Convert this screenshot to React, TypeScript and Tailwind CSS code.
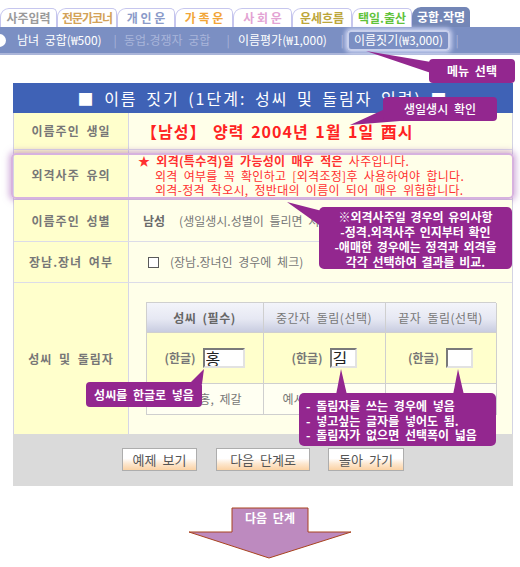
import React from "react";

const tabs = [
  { label: "사주입력", cls: "w-[57px] text-[#9a9a9a]" },
  { label: "전문가코너", cls: "w-[60px] text-[#d3a257] tracking-[-1px]" },
  { label: "개 인 운", cls: "w-[58px] text-[#8b9bc9]" },
  { label: "가 족 운", cls: "w-[58px] text-[#f2a537]" },
  { label: "사 회 운", cls: "w-[59px] text-[#e3a3d3]" },
  { label: "운세흐름", cls: "w-[60px] text-[#bca63a]" },
  { label: "택일.출산", cls: "w-[60px] text-[#5fc23a]" },
];

function Row({
  h,
  label,
  last,
  children,
}: {
  h: string;
  label: string;
  last?: boolean;
  children: React.ReactNode;
}) {
  return (
    <div className={`relative flex ${h} ${last ? "" : "border-b border-[#dcdce8]"}`}>
      <div className="flex w-[115px] shrink-0 items-center justify-center border-r border-[#d6d6e6] bg-[#ffffcc] font-bold tracking-[1px] text-[#777]">
        {label}
      </div>
      <div className="flex flex-1 items-center bg-[#ffffe9]">{children}</div>
    </div>
  );
}

function Btn({ w, children }: { w: string; children: React.ReactNode }) {
  return (
    <div
      className={`flex h-[23px] items-center justify-center border border-[#adadad] bg-[linear-gradient(to_bottom,#ffffff_0%,#ffffff_45%,#fde7cf_70%,#fbd2a4_100%)] text-[13px] text-[#555] ${w}`}
    >
      {children}
    </div>
  );
}

export default function App() {
  return (
    <div className="relative h-[567px] w-[520px] overflow-hidden bg-white font-['Noto_Sans_CJK_KR','Noto_Sans',sans-serif] text-[12px] leading-none text-[#777] [word-spacing:3px]">
      {/* Tabs */}
      <div className="flex h-[27px] items-end">
        {tabs.map((t) => (
          <div
            key={t.label}
            className={`flex h-[19px] items-center justify-center rounded-tl-[9px] rounded-tr-[5px] border border-b-0 border-[#c6c6ee] bg-white text-[12px] font-bold [word-spacing:0px] ${t.cls}`}
          >
            {t.label}
          </div>
        ))}
        <div className="flex h-[20px] w-[58px] items-center justify-center rounded-tl-[9px] rounded-tr-[5px] bg-[#7386b6] text-[12px] font-bold text-white [word-spacing:0px]">
          궁합.작명
        </div>
      </div>

      {/* Nav bar */}
      <div className="flex h-[28px] items-center border-b-2 border-[#aab5d9] bg-[#7b8fc3] text-[12px] text-white">
        <span className="ml-[-7px] h-[13px] w-[13px] shrink-0 rounded-full bg-white" />
        <span className="ml-[11px] w-[92px] shrink-0 whitespace-nowrap">남녀 궁합(₩500)</span>
        <span className="w-[12px] shrink-0 text-center text-[#a9b4d8]">|</span>
        <span className="w-[101px] shrink-0 whitespace-nowrap pl-[3px] text-[#a9b5da]">동업.경쟁자 궁합</span>
        <span className="w-[12px] shrink-0 text-center text-[#a9b4d8]">|</span>
        <span className="w-[103px] shrink-0 whitespace-nowrap pl-[4px]">이름평가(₩1,000)</span>
        <span className="w-[10px] shrink-0 text-center text-[#a9b4d8]">|</span>
        <span className="flex h-[21px] w-[103px] shrink-0 items-center justify-center whitespace-nowrap rounded-[4px] border-2 border-[#c8d0ec] shadow-[0_0_4px_2px_rgba(225,230,255,0.75)]">
          이름짓기(₩3,000)
        </span>
        <span className="w-[14px] shrink-0 text-center text-[#a9b4d8]">|</span>
      </div>

      {/* Main table */}
      <div className="ml-[13px] mt-[28px] w-[500px]">
        <div className="flex h-[30px] items-center justify-center bg-[#3f62b6] text-[16px] tracking-[2px] text-white">
          ■ 이름 짓기 (1단계: 성씨 및 돌림자 입력) ■
        </div>
        <div className="border-x border-[#d3d3e3]">
          <Row h="h-[37px]" label="이름주인 생일">
            <span className="pl-[12px] text-[16px] font-bold tracking-[1px] text-[#ff2222] [word-spacing:2px]">
              【남성】 양력 2004년 1월 1일 酉시
            </span>
          </Row>
          <Row h="h-[50px]" label="외격사주 유의">
            <div className="mt-[3px] flex flex-col pl-[9px] leading-[14.5px] tracking-[0.3px] text-[#ff3030]">
              <div>
                <span className="font-bold">★ 외격(특수격)일 가능성이 매우 적은</span> 사주입니다.
              </div>
              <div className="pl-[17px]">외격 여부를 꼭 확인하고 [외격조정]후 사용하여야 합니다.</div>
              <div className="pl-[17px]">외격-정격 착오시, 정반대의 이름이 되어 매우 위험합니다.</div>
            </div>
            <div className="pointer-events-none absolute left-[-3px] right-[-2px] top-[3px] h-[46px] rounded-[5px] border-[2px] border-[#d7b2df] shadow-[0_0_6px_2px_rgba(165,95,185,0.5)]" />
          </Row>
          <Row h="h-[42px]" label="이름주인 성별">
            <span className="whitespace-nowrap pl-[14px]">
              <b className="text-[#6b6b6b]">남성</b>
              <span className="ml-[14px]">(생일생시.성별이 틀리면 처음부터 다시 입력하세요)</span>
            </span>
          </Row>
          <Row h="h-[41px]" label="장남.장녀 여부">
            <span className="ml-[19px] h-[11px] w-[11px] shrink-0 border border-[#5a5a5a] bg-white" />
            <span className="ml-[11px]">(장남.장녀인 경우에 체크)</span>
          </Row>
          <Row h="h-[151px]" label="성씨 및 돌림자" last>
            <div className="flex w-full justify-center">
              <div className="grid w-[350px] grid-cols-[117px_122px_111px] border-l border-t border-[#cfcfcf]">
                <div className="flex h-[30px] items-center justify-center border-b border-r border-[#cfcfcf] bg-[linear-gradient(to_bottom,#f3f4fa_0%,#e6e8f3_55%,#c8cce0_100%)] font-bold tracking-[0.5px] text-[#666]">
                  성씨 (필수)
                </div>
                <div className="flex h-[30px] items-center justify-center border-b border-r border-[#cfcfcf] bg-[linear-gradient(to_bottom,#f3f4fa_0%,#e6e8f3_55%,#c8cce0_100%)] tracking-[0.5px] text-[#777]">
                  중간자 돌림(선택)
                </div>
                <div className="flex h-[30px] items-center justify-center border-b border-r border-[#cfcfcf] bg-[linear-gradient(to_bottom,#f3f4fa_0%,#e6e8f3_55%,#c8cce0_100%)] tracking-[0.5px] text-[#777]">
                  끝자 돌림(선택)
                </div>

                <div className="flex h-[51px] items-center justify-center gap-[7px] border-b border-r border-[#cfcfcf] bg-[#ffffcc]">
                  <b className="text-[#777]">(한글)</b>
                  <input
                    readOnly
                    value="홍"
                    className="h-[20px] w-[42px] border-2 border-b-[#e2e2e2] border-l-[#7a7a7a] border-r-[#e2e2e2] border-t-[#7a7a7a] bg-white px-[1px] text-[16px] leading-none text-[#222] outline-none"
                  />
                </div>
                <div className="flex h-[51px] items-center justify-center gap-[7px] border-b border-r border-[#cfcfcf] bg-[#ffffcc]">
                  <b className="text-[#777]">(한글)</b>
                  <input
                    readOnly
                    value="길"
                    className="h-[20px] w-[27px] border-2 border-b-[#e2e2e2] border-l-[#7a7a7a] border-r-[#e2e2e2] border-t-[#7a7a7a] bg-white px-[1px] text-[16px] leading-none text-[#222] outline-none"
                  />
                </div>
                <div className="flex h-[51px] items-center justify-center gap-[7px] border-b border-r border-[#cfcfcf] bg-[#ffffcc]">
                  <b className="text-[#777]">(한글)</b>
                  <input
                    readOnly
                    value=""
                    className="h-[20px] w-[27px] border-2 border-b-[#e2e2e2] border-l-[#7a7a7a] border-r-[#e2e2e2] border-t-[#7a7a7a] bg-white px-[1px] text-[16px] leading-none text-[#222] outline-none"
                  />
                </div>

                <div className="flex h-[31px] items-center justify-center border-b border-r border-[#cfcfcf] bg-[#fffff2]">
                  예시) 홍, 제갈
                </div>
                <div className="flex h-[31px] items-center justify-center border-b border-r border-[#cfcfcf] bg-[#fffff2]">
                  예시) 길, 성, 영
                </div>
                <div className="flex h-[31px] items-center justify-center border-b border-r border-[#cfcfcf] bg-[#fffff2]">
                  예시) 동, 수
                </div>
              </div>
            </div>
          </Row>
        </div>
        <div className="flex h-[52px] justify-center gap-[19px] bg-[#dadada] pt-[14px]">
          <Btn w="w-[75px]">예제 보기</Btn>
          <Btn w="w-[94px] mr-[-1px]">다음 단계로</Btn>
          <Btn w="w-[76px]">돌아 가기</Btn>
        </div>
      </div>

      {/* Next-step arrow */}
      <div className="relative ml-[188px] mt-[21px] h-[52px] w-[164px]">
        <svg width="164" height="52" viewBox="0 0 164 52" className="absolute left-0 top-0">
          <polygon
            points="44,1 120,1 120,25 163,25 81,51 1,25 44,25"
            fill="#bd8abf"
            stroke="#a8431e"
            strokeWidth="1"
          />
        </svg>
        <span className="absolute left-[44px] top-[5px] w-[76px] text-center font-bold text-white">다음 단계</span>
      </div>

      {/* Callout pointers */}
      <svg className="pointer-events-none absolute left-0 top-0" width="520" height="567">
        <g fill="#93278f">
          <polygon points="366,51 431,62 431,73" />
          <polygon points="350,125 385,109 400,121" />
          <polygon points="287,202 322,211 322,227" />
          <polygon points="204,369 189,384 202,384" />
          <polygon points="341,369 336,395 347,395" />
          <polygon points="458,369 453,395 464,395" />
        </g>
      </svg>

      {/* Callouts */}
      <div className="absolute left-[429px] top-[59px] flex h-[24px] w-[86px] items-center justify-center rounded-[4px] bg-[#93278f] font-bold text-white">
        메뉴 선택
      </div>
      <div className="absolute left-[383px] top-[97px] flex h-[24px] w-[114px] items-center justify-center rounded-[4px] bg-[#93278f] font-medium text-white">
        생일생시 확인
      </div>
      <div className="absolute left-[319px] top-[207px] h-[62px] w-[193px] rounded-[5px] bg-[#93278f] pt-[2px] text-center font-bold leading-[15px] text-white [word-spacing:2px]">
        <div>※외격사주일 경우의 유의사항</div>
        <div>-정격.외격사주 인지부터 확인</div>
        <div>-애매한 경우에는 정격과 외격을</div>
        <div>각각 선택하여 결과를 비교.</div>
      </div>
      <div className="absolute left-[86px] top-[382px] flex h-[25px] w-[116px] items-center justify-center rounded-[4px] bg-[#93278f] font-bold text-white">
        성씨를 한글로 넣음
      </div>
      <div className="absolute left-[299px] top-[393px] h-[53px] w-[197px] rounded-[5px] bg-[#93278f] pl-[7px] pt-[6px] font-bold leading-[14.5px] text-white">
        <div>- 돌림자를 쓰는 경우에 넣음</div>
        <div>- 넣고싶는 글자를 넣어도 됨.</div>
        <div>- 돌림자가 없으면 선택폭이 넓음</div>
      </div>
    </div>
  );
}
